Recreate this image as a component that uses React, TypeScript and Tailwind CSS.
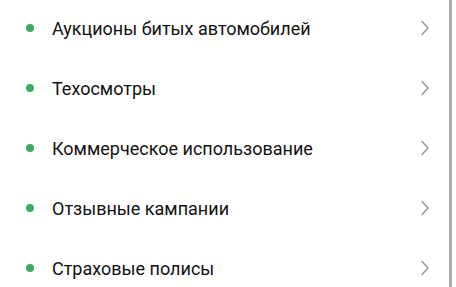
import React from "react";

const items = [
  "Аукционы битых автомобилей",
  "Техосмотры",
  "Коммерческое использование",
  "Отзывные кампании",
  "Страховые полисы",
];

function Chevron() {
  return (
    <svg width="10" height="16" viewBox="0 0 10 16" fill="none">
      <path d="M2 1.5 L8 8 L2 14.5" stroke="#9a9a9a" strokeWidth="1.6" strokeLinecap="round" strokeLinejoin="round" />
    </svg>
  );
}

export default function App() {
  return (
    <div className="w-[456px] h-[287px] bg-white overflow-hidden flex" style={{ fontFamily: "Roboto, 'Noto Sans', sans-serif" }}>
      <div className="w-[449px] flex flex-col -mt-[2px]">
        {items.map((t) => (
          <div key={t} className="h-[60px] shrink-0 flex items-center pl-[26px] pr-[19px]">
            <span className="w-[8px] h-[8px] rounded-full bg-[#3dab5e] shrink-0" />
            <span className="ml-[18px] text-[18px] text-[#111111] flex-1">{t}</span>
            <Chevron />
          </div>
        ))}
      </div>
      <div className="w-[3px] bg-[#a9a9a9]" />
    </div>
  );
}
